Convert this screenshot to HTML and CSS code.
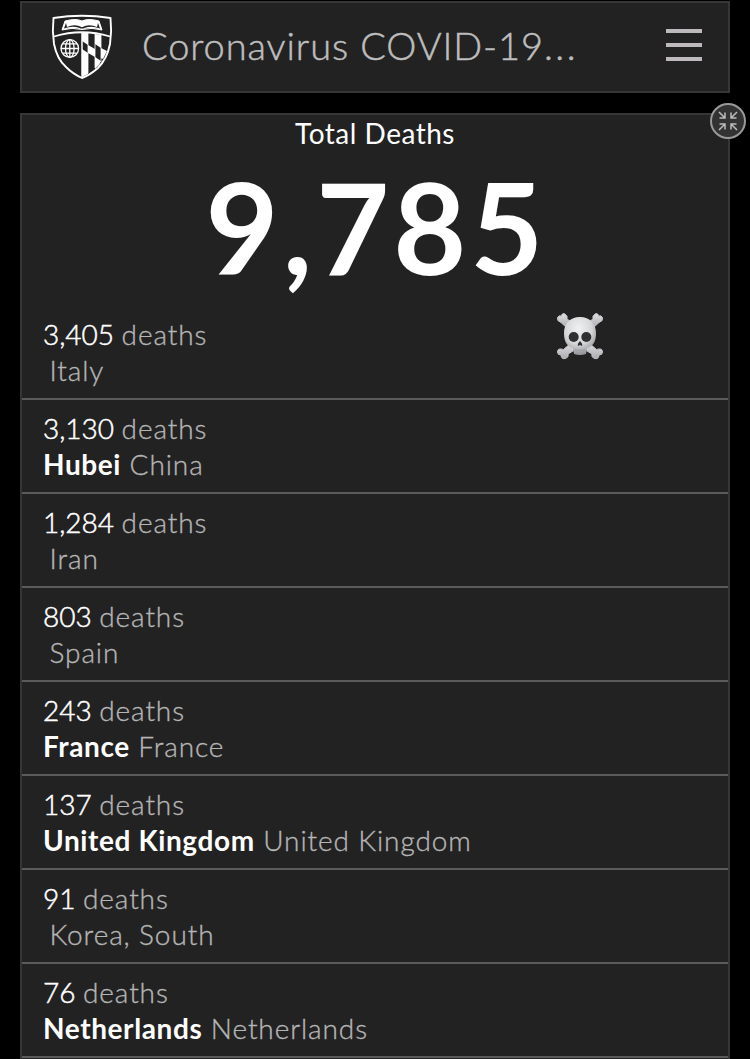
FILE: index.html
```html
<!DOCTYPE html>
<html lang="en">
<head>
<meta charset="utf-8">
<title>Coronavirus COVID-19</title>
<link rel="stylesheet" href="styles.css">
</head>
<body>
<header class="topbar">
  <svg class="shield" viewBox="40 5 90 85" width="90" height="85" fill="none" stroke="#fff">
    <path d="M53.500 18Q82 13.500 110.500 18Q112 31 110 44Q107 59 98 68Q90 75 82 78Q73 74 66 67Q57 59 54 44Q52 31 53.500 18Z" stroke-width="1.900"/>
    <path d="M54 36.500Q82 28 110 36.500" stroke-width="1.800"/>
    <path d="M65 21Q76 18 82 21Q88 18 99 21L102 30Q92 27 82 29.500Q72 27 62 30Z" fill="#fff"/>
    <path d="M66 23L64 28.500Q72 25.500 79 27.700L80.500 28.500H83.500L85 27.700Q92 25.500 100 28.500L98 23L97 27Q89 23.500 82 27.300Q75 23.500 67 27Z" fill="#222" stroke="none"/>
    <path d="M82 33V77" stroke-width="1.500"/>
    <path d="M82 33L88 33V45L82 41ZM95 34L101 35V48L95 44ZM88 45L95 49V57L88 53ZM101 48L107 51L103 59L101 58ZM82 49L88 53V74L82 77ZM95 57L101 61L99 65L95 69Z" fill="#fff" stroke="none"/>
    <path d="M88 33V73M95 34V68M101 35V62" stroke-width=".8"/>
    <g stroke-width="1.300"><circle cx="69.800" cy="48.500" r="8.800"/><ellipse cx="69.800" cy="48.500" rx="4.300" ry="8.800"/><path d="M69.800 39.700V57.300M61 48.500H78.600M62.500 43.800H77M62.500 53.200H77"/></g>
  </svg>
  <h1 class="title">Coronavirus COVID-19<span class="dots">...</span></h1>
  <div class="menu"><i></i><i></i><i></i></div>
</header>
<main class="panel">
  <svg class="collapse" viewBox="0 0 36 36" width="36" height="36" fill="none">
    <circle cx="18" cy="18" r="17" fill="#333" stroke="#999" stroke-width="2"/>
    <path d="M9 9L15 15M15 9.500V15H9.500M27 9L21 15M21 9.500V15H26.500M9 27L15 21M9.500 21H15V26.500M27 27L21 21M26.500 21H21V26.500" stroke="#bbb" stroke-width="1.500"/>
  </svg>
  <div class="heading">Total Deaths</div>
  <div class="total">9,785</div>
  <svg class="skull" viewBox="0 0 80 70" width="80" height="70">
    <defs>
      <radialGradient id="head" cx=".45" cy=".3" r=".7"><stop offset="0" stop-color="#f0f1f2"/><stop offset=".6" stop-color="#d5d6d8"/><stop offset="1" stop-color="#929396"/></radialGradient>
      <linearGradient id="bone" x2="0" y2="1"><stop offset="0" stop-color="#e0e0e2"/><stop offset="1" stop-color="#aaaab0"/></linearGradient>
    </defs>
    <g fill="url(#bone)" stroke="#c4c4c8" stroke-width="1" stroke-linejoin="round">
      <path d="M27 28L21 22.500Q16.500 21 17.500 17.500Q18.500 15 21.500 16Q22 12.500 25 14Q28 16 27 19L36 25ZM53 28L59 22.500Q63.500 21 62.500 17.500Q61.500 15 58.500 16Q58 12.500 55 14Q52 16 53 19L44 25Z"/>
      <path d="M31 43L23.500 49.500Q17.500 47.500 17.500 52Q17.500 55 21 55Q21.500 59.500 25 58.500Q29 57.500 28 54L38 48ZM49 43L56.500 49.500Q62.500 47.500 62.500 52Q62.500 55 59 55Q58.500 59.500 55 58.500Q51 57.500 52 54L42 48Z"/>
    </g>
    <path d="M40 17C30 17 23.500 24 24 34C24 42 28 47 33 48L34 54Q40 56 46 54L47 48C52 47 56 42 56 34C56.500 24 50 17 40 17Z" fill="url(#head)"/>
    <ellipse cx="33.700" cy="37" rx="5" ry="4.900" fill="#303030"/><ellipse cx="46.300" cy="37" rx="5" ry="4.900" fill="#303030"/>
    <path d="M40 41Q37 44 38 46L40 45L42 46Q43 44 40 41Z" fill="#303030"/>
    <path d="M34 50H46M37 50V54M40 50V55M43 50V54" stroke="#99999d" stroke-width=".7"/>
  </svg>
  <ul class="list">
    <li><div class="count"><b>3,405</b> <span>deaths</span></div><div class="place"><strong></strong> <span>Italy</span></div></li>
    <li><div class="count"><b>3,130</b> <span>deaths</span></div><div class="place"><strong>Hubei</strong> <span>China</span></div></li>
    <li><div class="count"><b>1,284</b> <span>deaths</span></div><div class="place"><strong></strong> <span>Iran</span></div></li>
    <li><div class="count"><b>803</b> <span>deaths</span></div><div class="place"><strong></strong> <span>Spain</span></div></li>
    <li><div class="count"><b>243</b> <span>deaths</span></div><div class="place"><strong>France</strong> <span>France</span></div></li>
    <li><div class="count"><b>137</b> <span>deaths</span></div><div class="place"><strong>United Kingdom</strong> <span>United Kingdom</span></div></li>
    <li><div class="count"><b>91</b> <span>deaths</span></div><div class="place"><strong></strong> <span>Korea, South</span></div></li>
    <li><div class="count"><b>76</b> <span>deaths</span></div><div class="place"><strong>Netherlands</strong> <span>Netherlands</span></div></li>
  </ul>
</main>
</body>
</html>
```
FILE: styles.css
```css
* { box-sizing: border-box; }
body { margin: 0; padding: 1px 20px 0; height: 1059px; overflow: hidden; background: #000; color: #fff; font-family: Lato, sans-serif; }
.topbar { display: flex; height: 92px; padding-right: 26px; background: #222; border: 2px solid #363636; }
.shield { margin: 2px 0 0 18px; flex: none; }
.title { flex: 1; margin: 0 0 0 12px; font-size: 38px; font-weight: 300; line-height: 85px; letter-spacing: .9px; color: #bdbdbd; white-space: nowrap; -webkit-text-stroke: .5px #bdbdbd; }
.dots { letter-spacing: 2.500px; }
.menu { display: flex; flex-direction: column; gap: 10px; width: 36px; padding-top: 26px; }
.menu i { height: 4px; background: #bdb9bd; }
.panel { position: relative; height: 946px; margin-top: 20px; background: #222; border: 2px solid #363636; border-bottom: 0; }
.collapse { position: absolute; top: -12px; right: -18px; }
.heading { height: 36px; text-align: center; font-size: 28px; line-height: 37px; letter-spacing: .5px; }
.total { height: 155px; padding-left: 3px; text-align: center; font-size: 126px; font-weight: 700; line-height: 152px; letter-spacing: 4px; }
.skull { position: absolute; left: 518px; top: 185px; }
.list { list-style: none; margin: 0; padding: 0; }
.list li { height: 94px; padding: 10px 21px; border-bottom: 2px solid #5b5b5b; font-size: 28px; line-height: 36px; color: #b5b5b5; font-weight: 300; }
.list li:last-child { height: 94px; }
.count, .place { height: 36px; white-space: pre; letter-spacing: .9px; }
.count span, .place span { -webkit-text-stroke: .35px #b5b5b5; }
.count b { font-weight: 300; color: #fff; letter-spacing: 0; -webkit-text-stroke: .5px #fff; margin-right: -1px; }
.place strong { font-weight: 700; color: #fff; letter-spacing: .6px; }
.place strong:empty { margin-left: -2px; }
```
